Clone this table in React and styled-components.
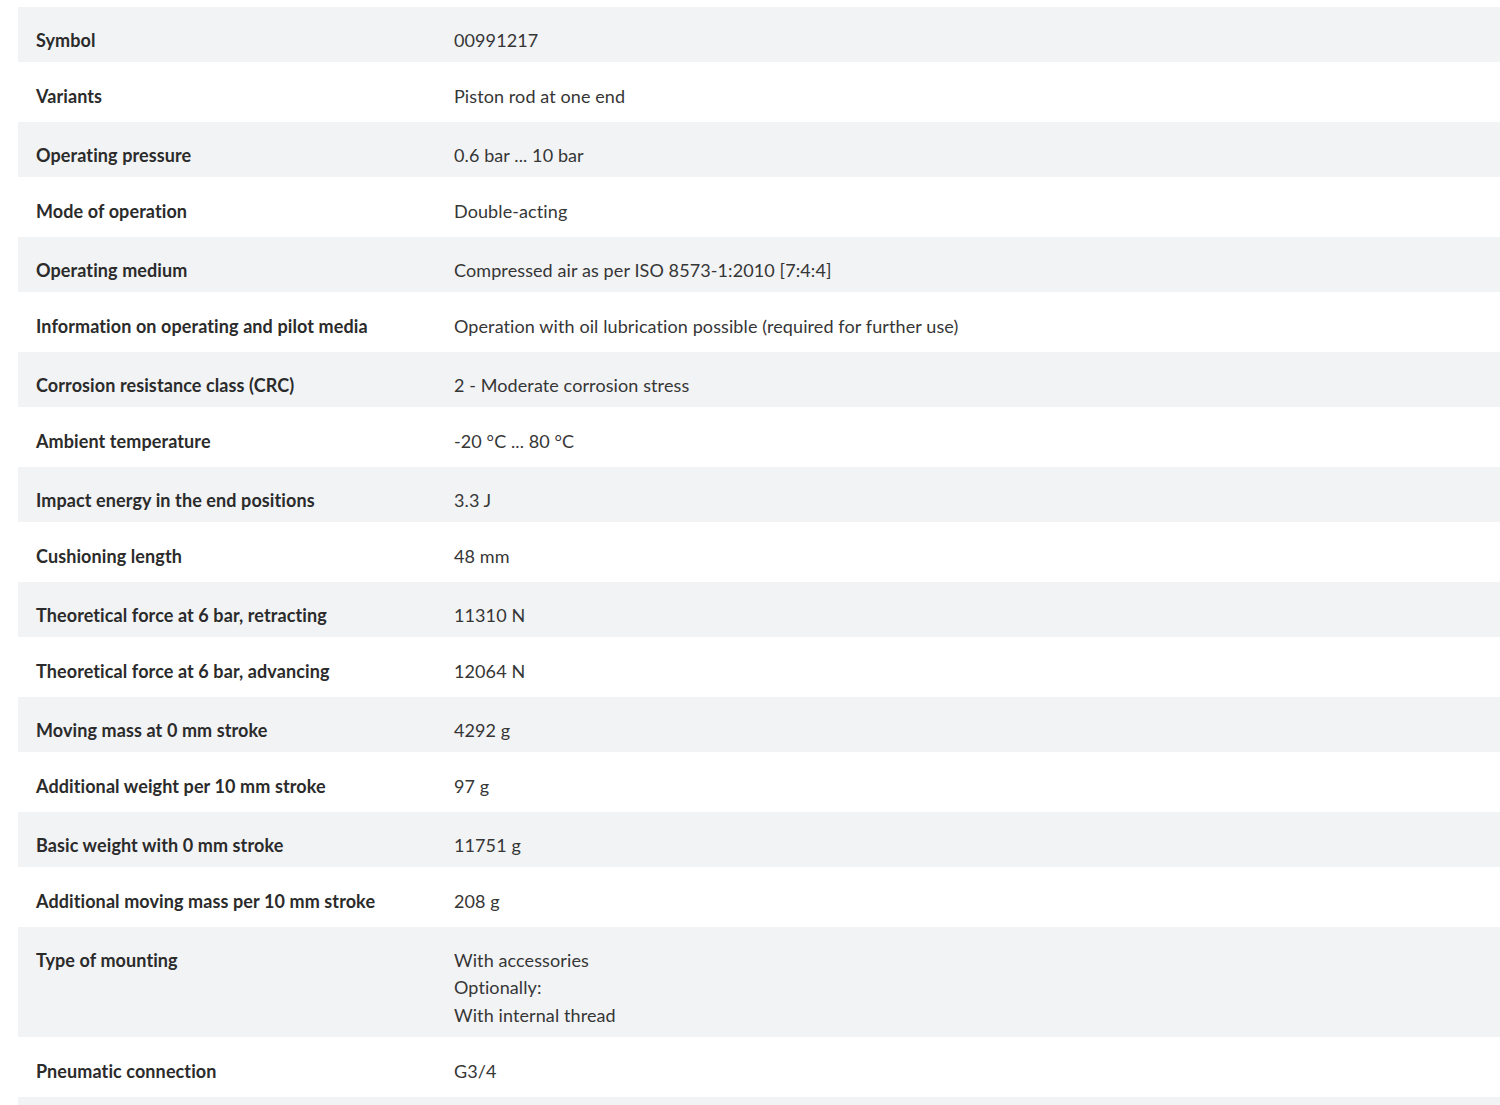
import React from "react";
import styled, { createGlobalStyle } from "styled-components";

const GlobalStyle = createGlobalStyle`
  html, body {
    margin: 0;
    padding: 0;
    background: #ffffff;
  }
  body {
    font-family: "Lato", "Noto Sans", Arial, sans-serif;
    color: #333333;
  }
`;

const Page = styled.main`
  padding: 7px 0 0 18px;
`;

const Table = styled.dl`
  margin: 0;
  display: flex;
  flex-direction: column;
`;

const Row = styled.div`
  display: grid;
  grid-template-columns: 418px 1fr;
  min-height: ${(p) => (p.$shaded ? "55px" : "60px")};
  box-sizing: border-box;
  padding: ${(p) => (p.$shaded ? "19.5px 18px 8px" : "20.5px 18px 12px")};
  background: ${(p) => (p.$shaded ? "#f2f3f5" : "#ffffff")};
  font-size: 18px;
  line-height: 27.5px;
  letter-spacing: 0.1px;
`;

const Label = styled.dt`
  margin: 0;
  font-weight: 700;
  color: #2b2b2b;
`;

const Value = styled.dd`
  margin: 0;
  font-weight: 400;
  color: #363636;
`;

const ValueLine = styled.div``;

const rows = [
  ["Symbol", ["00991217"]],
  ["Variants", ["Piston rod at one end"]],
  ["Operating pressure", ["0.6 bar ... 10 bar"]],
  ["Mode of operation", ["Double-acting"]],
  ["Operating medium", ["Compressed air as per ISO 8573-1:2010 [7:4:4]"]],
  ["Information on operating and pilot media", ["Operation with oil lubrication possible (required for further use)"]],
  ["Corrosion resistance class (CRC)", ["2 - Moderate corrosion stress"]],
  ["Ambient temperature", ["-20 °C ... 80 °C"]],
  ["Impact energy in the end positions", ["3.3 J"]],
  ["Cushioning length", ["48 mm"]],
  ["Theoretical force at 6 bar, retracting", ["11310 N"]],
  ["Theoretical force at 6 bar, advancing", ["12064 N"]],
  ["Moving mass at 0 mm stroke", ["4292 g"]],
  ["Additional weight per 10 mm stroke", ["97 g"]],
  ["Basic weight with 0 mm stroke", ["11751 g"]],
  ["Additional moving mass per 10 mm stroke", ["208 g"]],
  ["Type of mounting", ["With accessories", "Optionally:", "With internal thread"]],
  ["Pneumatic connection", ["G3/4"]],
];

export default function App() {
  return (
    <Page>
      <GlobalStyle />
      <Table>
        {rows.map(([label, values], i) => (
          <Row key={label} $shaded={i % 2 === 0}>
            <Label>{label}</Label>
            <Value>
              {values.map((v) => (
                <ValueLine key={v}>{v}</ValueLine>
              ))}
            </Value>
          </Row>
        ))}
        <Row $shaded aria-hidden="true" />
      </Table>
    </Page>
  );
}
